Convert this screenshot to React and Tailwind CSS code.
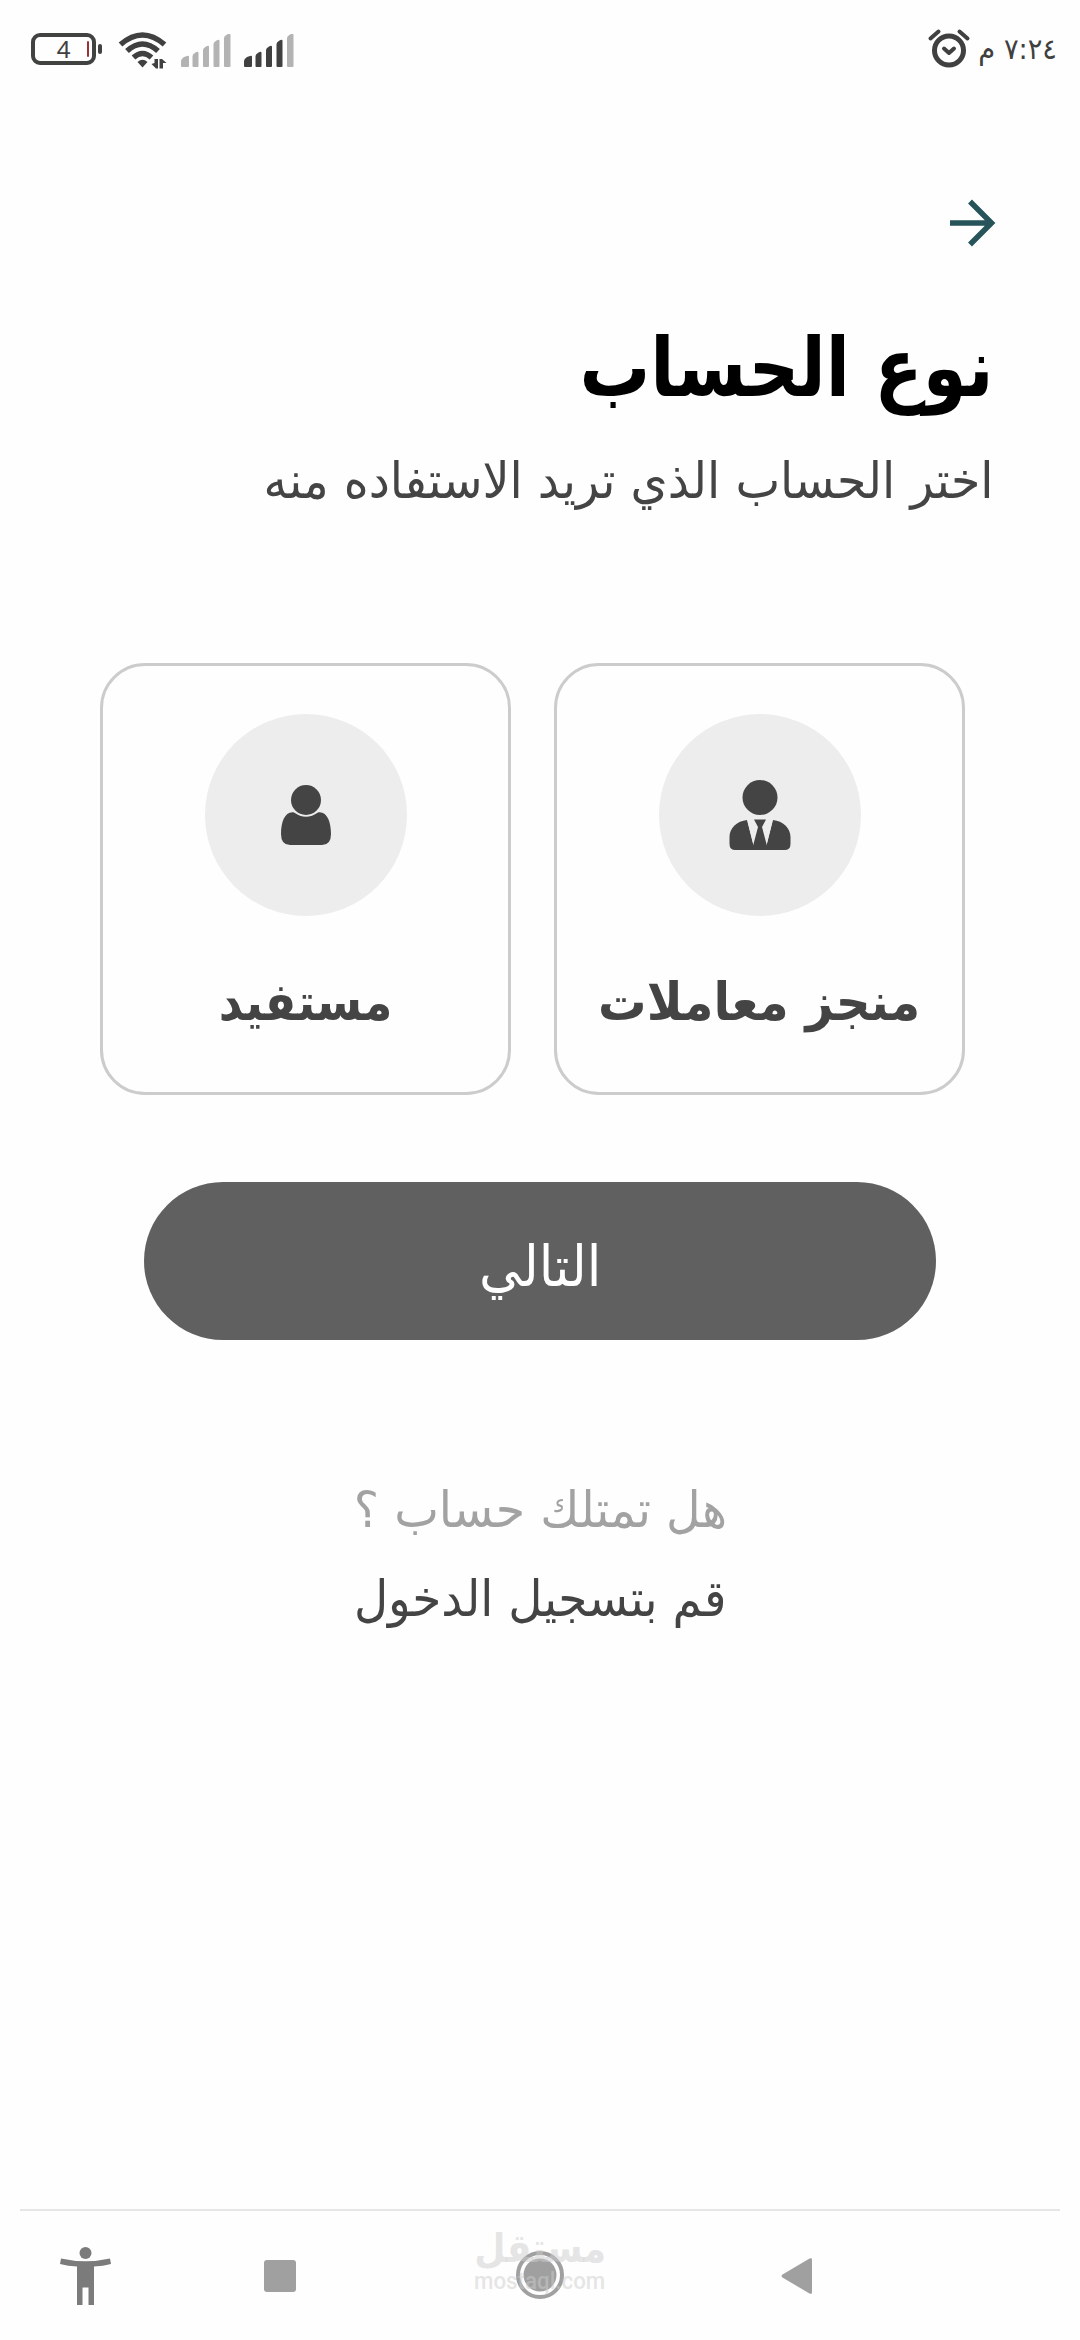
import React, { useState } from "react";

const SignalIcon = ({ active }) => {
  const bars = [
    "M0 32v-5q0-2 3-4l3-1q2-1 2 1v9q0 1-1 1H1q-1 0-1-1z",
    "M11.500 32v-10q0-2 3-3.500 3-1.500 3 .5v13q0 1-1 1h-4q-1 0-1-1z",
    "M22 32V16q0-2 3-3.500 3-1.500 3 .5v19q0 1-1 1h-4q-1 0-1-1z",
    "M32.500 32V10q0-2 3-3.500 3-1.500 3 .5v25q0 1-1 1h-4q-1 0-1-1z",
    "M43 32V4q0-2 3-3.500 3.500-1.500 3.500 .5v31q0 1-1 1H44q-1 0-1-1z",
  ];
  return (
    <svg className="h-[34px] w-[50px]" viewBox="0 0 50 34">
      {bars.map((d, i) => (
        <path key={i} d={d} fill={i < active ? "#404040" : "#b3b3b3"} />
      ))}
    </svg>
  );
};

const WifiIcon = () => (
  <svg className="h-[38px] w-[50px]" viewBox="0 0 50 38" fill="none" stroke="#404040" strokeWidth="5.500">
    <path d="M2.500 12.500Q24.500-6.500 46.500 12.500" />
    <path d="M9 19Q24.500 5 40 19" />
    <path d="M15.500 25.500Q24.500 17.500 33.500 25.500" />
    <path d="M19.500 30q5-4.500 10 0l-5 5.500z" fill="#404040" stroke="none" />
    <path d="M33.500 32l3-1v-4h3.500v9.500h-2zM41.500 27h2.500l4.500 4h-3.500v5.500h-3.500z" fill="#404040" stroke="none" />
  </svg>
);

const AlarmIcon = () => (
  <svg className="h-[40px] w-[44px]" viewBox="0 0 44 40" fill="none" stroke="#404040">
    <circle cx="22" cy="22.500" r="14.500" strokeWidth="5" />
    <path d="M3.500 10.500l8-7M40.500 10.500l-8-7" strokeWidth="4" strokeLinecap="round" />
    <path d="M17 20.500l5 4.500 5-4.500" strokeWidth="4" strokeLinecap="round" strokeLinejoin="round" />
  </svg>
);

const AgentIcon = () => (
  <svg className="h-[72px] w-[62px]" viewBox="0 0 62 72" fill="#444444">
    <circle cx="31" cy="18.500" r="17.500" />
    <path d="M18 41L24.500 66.500H37.500L44 41C54 42 61.500 49 61.500 58v7q0 6-6 6H6.500q-6 0-6-6v-7C.500 49 8 42 18 41z" />
    <path d="M18 40h26l-6.500 26L31 40l-6.500 26z" fill="#ededed" />
    <path d="M25 40.500h12l-4 7.500 5 19H24l5-19z" />
  </svg>
);

const UserIcon = () => (
  <svg className="h-[62px] w-[50px]" viewBox="0 0 50 62" fill="#444444">
    <circle cx="25" cy="16" r="15" />
    <path d="M13 28.500Q25 37 37 28.500C46 27 50 38 50 50q0 11-9 11H9Q0 61 0 50C0 38 4 27 13 28.500z" />
  </svg>
);

const StatusBar = () => (
  <div dir="ltr" className="flex h-[100px] items-start justify-between">
    <div className="flex items-start pt-8 pl-[31px]">
      <div className="mt-[1px] flex items-center">
        <div className="relative flex h-8 w-[65px] items-center justify-center rounded-[9px] border-[4.500px] border-[#404340] font-['Noto_Sans'] text-[24px] text-[#404040]">
          4
          <span className="absolute top-1 right-[3px] h-4 w-[2px] rounded bg-[#a03038]" />
        </div>
        <span className="ml-[2px] h-[10px] w-[4px] rounded-sm bg-[#404340]" />
      </div>
      <div className="ml-4">
        <WifiIcon />
      </div>
      <div className="mt-0.5 ml-[13px] flex gap-[13px]">
        <SignalIcon active={0} />
        <SignalIcon active={4} />
      </div>
    </div>
    <div className="flex items-start pt-7 pr-[23px] text-[#404040]">
      <AlarmIcon />
      <span dir="rtl" className="ml-2 w-[78px] origin-right scale-x-94 font-['DejaVu_Sans'] text-[29px] leading-[42px] whitespace-nowrap">
        ٧:٢٤ م
      </span>
    </div>
  </div>
);

const AccountCard = ({ label, icon, selected, onClick, labelClass }) => (
  <button
    onClick={onClick}
    aria-pressed={selected}
    className="flex h-[432px] w-[411px] flex-col items-center rounded-[45px] border-[3px] border-[#cccccc] pt-12"
  >
    <span className="flex h-[202px] w-[202px] items-center justify-center rounded-full bg-[#ededed]">{icon}</span>
    <span className={`mt-12 text-[52px] leading-[76px] font-bold whitespace-nowrap text-[#444444] ${labelClass}`}>{label}</span>
  </button>
);

const NavBar = () => (
  <div dir="ltr" className="mx-5 mt-auto flex h-[131px] items-start border-t-2 border-[#e6e6e6]">
    <svg className="mt-[36px] ml-[40px] h-[58px] w-[52px]" viewBox="0 0 52 58" fill="#7b7b7b">
      <circle cx="25.500" cy="6" r="6" />
      <path d="M1 11.500Q25.500 17 50 11.500l1 5.500q-8 2-17 2.500V58h-5.500V40.500h-6V58H17V19.500Q8 19 0 17z" />
    </svg>
    <div className="mt-[49px] ml-[152px] h-8 w-8 rounded-[3px] bg-[#a0a0a0]" />
    <div className="relative ml-[220px] h-full w-12">
      <svg className="absolute top-[40px] left-0 h-12 w-12" viewBox="0 0 48 48">
        <circle cx="24" cy="24" r="22" fill="none" stroke="#a0a0a0" strokeWidth="4" />
        <circle cx="24" cy="24" r="16.500" fill="#a0a0a0" />
      </svg>
      <div className="absolute top-[15px] left-[-41px] flex w-[130px] flex-col items-center text-[#cccccc]/50">
        <span dir="rtl" className="scale-x-90 font-['DejaVu_Sans'] text-[40px] leading-[44px] font-bold whitespace-nowrap">مستقل</span>
        <span className="scale-x-97 font-['Roboto'] text-[23px] leading-[24px] font-medium">mostaql.com</span>
      </div>
    </div>
    <svg className="mt-[46px] ml-[217px] h-[38px] w-[32px]" viewBox="0 0 32 38" fill="#a0a0a0">
      <path d="M1.500 17.500L28.500 1.500q2.500-1 2.500 1v33q0 2-2.500 1L1.500 20.500q-2-1.500 0-3z" />
    </svg>
  </div>
);

const App = () => {
  const [account, setAccount] = useState(null);

  return (
    <div dir="rtl" className="flex h-[2340px] w-[1080px] flex-col overflow-hidden bg-[#fefefe] font-['DejaVu_Sans',sans-serif]">
      <StatusBar />

      <header className="flex flex-col items-start pr-[87px]">
        <button className="mt-[98px] mr-[-5px]" aria-label="رجوع">
          <svg className="h-[50px] w-[50px]" viewBox="0 0 50 50" fill="none" stroke="#26545a" strokeWidth="5.500">
            <path d="M2 25h42M22 3.500L43.500 25 22 46.500" />
          </svg>
        </button>
        <h1 className="mt-[70px] origin-right scale-x-86 text-[82px] leading-[100px] font-bold whitespace-nowrap text-black">
          نوع الحساب
        </h1>
        <p className="mt-[30px] origin-right scale-x-95 text-[50px] leading-[66px] whitespace-nowrap text-[#444444]">
          اختر الحساب الذي تريد الاستفاده منه
        </p>
      </header>

      <div className="mt-[149px] flex gap-[43px] pr-[115px]">
        <AccountCard
          label="منجز معاملات"
          icon={<AgentIcon />}
          selected={account === "agent"}
          onClick={() => setAccount("agent")}
          labelClass="scale-x-93"
        />
        <AccountCard
          label="مستفيد"
          icon={<UserIcon />}
          selected={account === "user"}
          onClick={() => setAccount("user")}
          labelClass="scale-x-89"
        />
      </div>

      <button className="mt-[87px] mr-[144px] flex h-[158px] w-[792px] items-center justify-center rounded-full bg-[#606060] text-white">
        <span className="scale-x-94 pt-[11px] text-[56px] leading-[80px]">التالي</span>
      </button>

      <div className="mt-[137px] flex flex-col items-center">
        <p className="scale-x-95 text-[50px] leading-[66px] whitespace-nowrap text-[#a2a2a2]">هل تمتلك حساب ؟</p>
        <button className="mt-[23px] scale-x-94 text-[50px] leading-[66px] whitespace-nowrap text-[#444444]">
          قم بتسجيل الدخول
        </button>
      </div>

      <NavBar />
    </div>
  );
};

export default App;
